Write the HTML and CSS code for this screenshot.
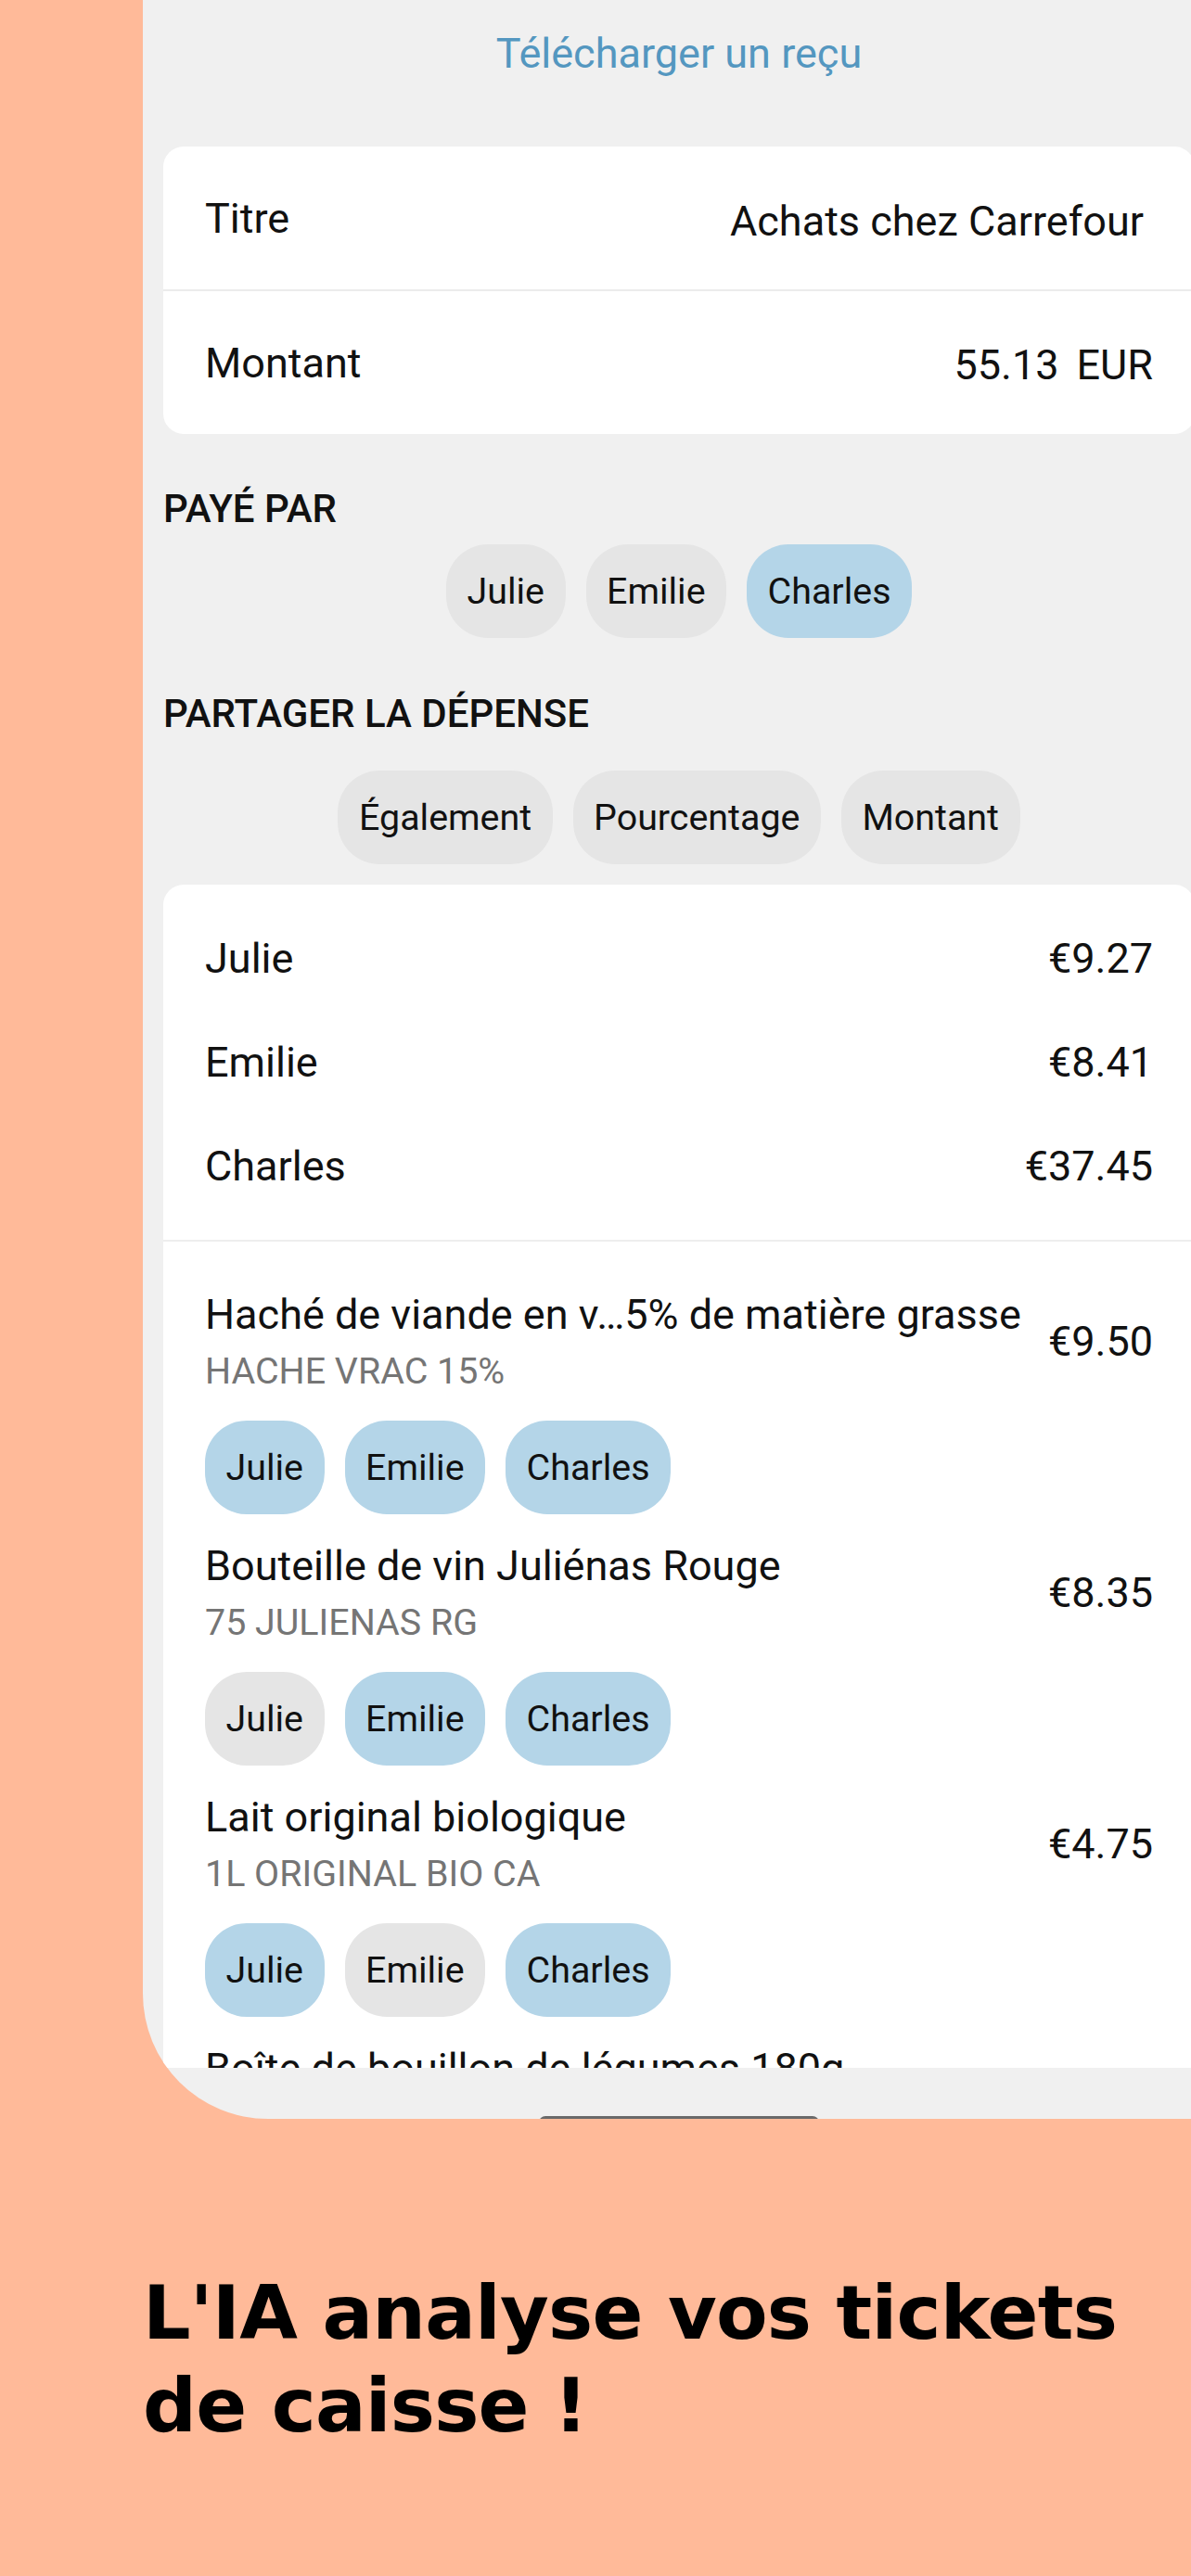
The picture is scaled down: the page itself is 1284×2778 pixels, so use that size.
FILE: index.html
```html
<!DOCTYPE html>
<html lang="fr">
<head>
<meta charset="utf-8">
<title>Dépense</title>
<link rel="stylesheet" href="styles.css">
</head>
<body>
<div class="screen">
  <div class="content">
    <div class="download">Télécharger un reçu</div>

    <div class="card">
      <div class="field-row">
        <span class="label">Titre</span>
        <span class="value title-value">Achats chez Carrefour</span>
      </div>
      <div class="field-row">
        <span class="label">Montant</span>
        <span class="amount"><span>55.13</span><span>EUR</span></span>
      </div>
    </div>

    <div class="section-title paid">PAYÉ PAR</div>
    <div class="chips center">
      <span class="chip">Julie</span>
      <span class="chip">Emilie</span>
      <span class="chip on">Charles</span>
    </div>

    <div class="section-title split">PARTAGER LA DÉPENSE</div>
    <div class="chips center split-chips">
      <span class="chip">Également</span>
      <span class="chip">Pourcentage</span>
      <span class="chip">Montant</span>
    </div>

    <div class="card list-card">
      <div class="summary">
        <div class="sum-row"><span>Julie</span><span>€9.27</span></div>
        <div class="sum-row"><span>Emilie</span><span>€8.41</span></div>
        <div class="sum-row"><span>Charles</span><span>€37.45</span></div>
      </div>
      <div class="items">
        <div class="item">
          <div class="item-head">
            <div class="item-text">
              <div class="item-title">Haché de viande en v…5% de matière grasse</div>
              <div class="item-sub">HACHE VRAC 15%</div>
            </div>
            <div class="item-price">€9.50</div>
          </div>
          <div class="chips">
            <span class="chip on">Julie</span>
            <span class="chip on">Emilie</span>
            <span class="chip on">Charles</span>
          </div>
        </div>
        <div class="item">
          <div class="item-head">
            <div class="item-text">
              <div class="item-title">Bouteille de vin Juliénas Rouge</div>
              <div class="item-sub">75 JULIENAS RG</div>
            </div>
            <div class="item-price">€8.35</div>
          </div>
          <div class="chips">
            <span class="chip">Julie</span>
            <span class="chip on">Emilie</span>
            <span class="chip on">Charles</span>
          </div>
        </div>
        <div class="item">
          <div class="item-head">
            <div class="item-text">
              <div class="item-title">Lait original biologique</div>
              <div class="item-sub">1L ORIGINAL BIO CA</div>
            </div>
            <div class="item-price">€4.75</div>
          </div>
          <div class="chips">
            <span class="chip on">Julie</span>
            <span class="chip">Emilie</span>
            <span class="chip on">Charles</span>
          </div>
        </div>
        <div class="item">
          <div class="item-head">
            <div class="item-text">
              <div class="item-title">Boîte de bouillon de légumes 180g</div>
            </div>
          </div>
        </div>
      </div>
    </div>
  </div>
  <div class="navbar"><span class="home-pill"></span></div>
</div>

<h1 class="headline">L'IA analyse vos tickets<br>de caisse !</h1>
</body>
</html>
```

FILE: styles.css
```css
html, body {
  margin: 0;
  padding: 0;
  width: 1284px;
  height: 2778px;
  overflow: hidden;
}

body {
  background: #ffba99;
  font-family: Roboto, "Liberation Sans", sans-serif;
  color: #111;
}

.screen {
  margin-left: 154px;
  width: 1156px;
  height: 2285px;
  background: #f0f0f0;
  border-bottom-left-radius: 135px;
  overflow: hidden;
  display: flex;
  flex-direction: column;
}

.content {
  flex: none;
  height: 2230px;
  overflow: hidden;
}

.navbar {
  flex: 1;
  display: flex;
  justify-content: center;
  padding-top: 52px;
  box-sizing: border-box;
}

.home-pill {
  width: 302px;
  height: 14px;
  border-radius: 7px;
  background: #6a6a6a;
}

.download {
  box-sizing: border-box;
  height: 158px;
  padding-top: 31px;
  text-align: center;
  color: #5497c0;
  font-size: 45px;
  line-height: 53px;
}

.card {
  margin: 0 22px;
  background: #fff;
  border-radius: 22px;
}

.field-row {
  height: 154px;
  padding: 0 45px;
  display: flex;
  align-items: center;
  justify-content: space-between;
  font-size: 45px;
  line-height: 53px;
}

.field-row + .field-row {
  border-top: 2px solid #ececec;
}

.title-value {
  padding-right: 10px;
  padding-top: 6px;
}

.amount {
  display: flex;
  gap: 19px;
  padding-top: 4px;
}

.section-title {
  margin: 56px 22px 13px;
  font-size: 42px;
  line-height: 50px;
  font-weight: 500;
}

.section-title.split {
  margin-top: 57px;
  margin-bottom: 36px;
}

.chips {
  display: flex;
  gap: 22px;
}

.chips.center {
  justify-content: center;
}

.split-chips {
  margin-bottom: 22px;
}

.chip {
  height: 101px;
  padding: 0 22.5px;
  border-radius: 45px;
  background: #e5e5e5;
  display: flex;
  align-items: center;
  font-size: 39.4px;
  line-height: 46px;
}

.chip.on {
  background: #b4d5e8;
}

.summary {
  padding: 23px 45px 24px;
}

.sum-row {
  height: 112px;
  display: flex;
  align-items: center;
  justify-content: space-between;
  font-size: 45px;
  line-height: 53px;
}

.items {
  border-top: 2px solid #eeeeee;
  padding: 52px 45px 0;
}

.item {
  padding-bottom: 29px;
}

.item-head {
  display: flex;
  align-items: center;
  justify-content: space-between;
}

.item-text {
  white-space: nowrap;
}

.item-title {
  font-size: 45px;
  line-height: 53px;
}

.item-sub {
  margin-top: 12px;
  font-size: 39.4px;
  line-height: 46px;
  color: #757575;
}

.item-price {
  font-size: 45px;
  line-height: 53px;
  padding-left: 20px;
}

.item .chips {
  margin-top: 30px;
}

.headline {
  margin: 159px 0 0;
  padding-left: 154px;
  font-family: "DejaVu Sans", "Liberation Sans", sans-serif;
  font-weight: 700;
  font-size: 81px;
  line-height: 100px;
  letter-spacing: -0.8px;
  color: #000;
}
```
